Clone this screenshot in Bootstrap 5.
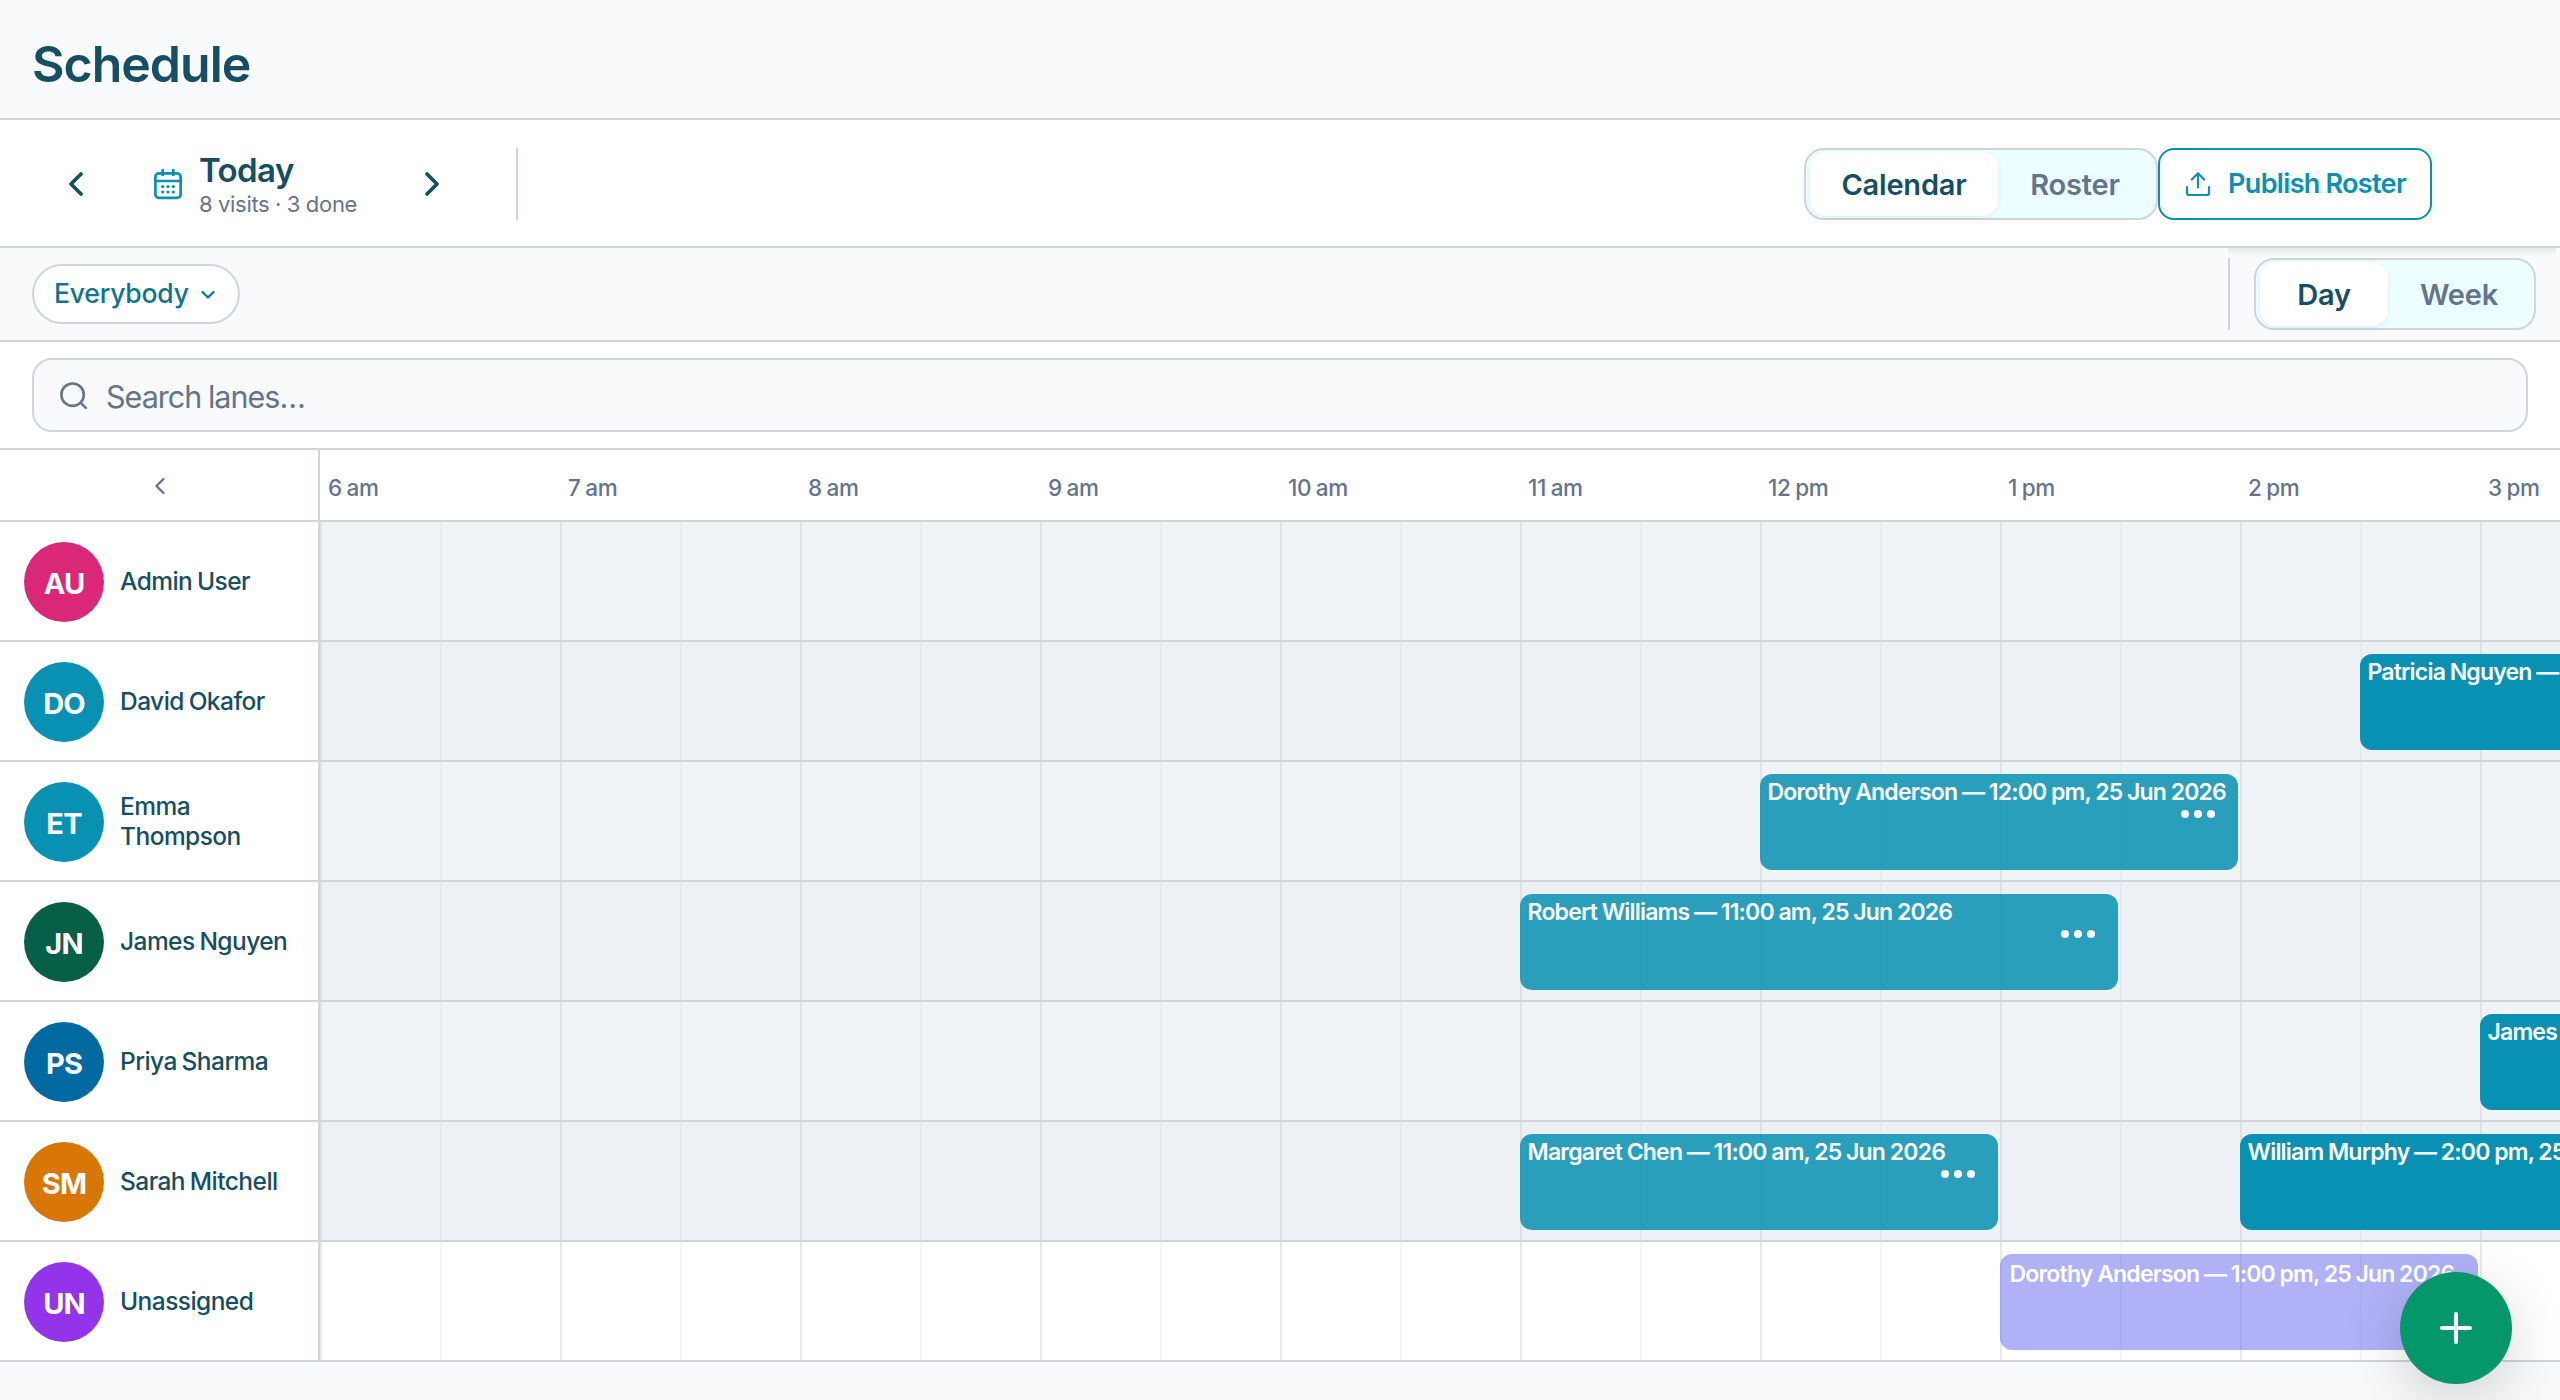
<!DOCTYPE html>
<html lang="en">
<head>
<meta charset="utf-8">
<title>Schedule</title>
<link href="https://cdn.jsdelivr.net/npm/bootstrap@5.3.0/dist/css/bootstrap.min.css" rel="stylesheet">
<style>
  :root { --line: #d0d4db; --ink: #164e63; --muted: #64748b; --teal: #0891b2; }
  body { font-family: Inter, "Open Sans", sans-serif; background: #f9fafc; color: var(--ink); height: 1400px; overflow: hidden; }
  svg { display: block; flex: none; }
  .rule-b { border-bottom: 2px solid var(--line); }
  .page-head { height: 120px; padding: 34px 32px 0; }
  .page-title { font-size: 50px; line-height: 60px; font-weight: 600; letter-spacing: -1px; }
  .toolbar { height: 128px; padding: 2px 128px 0 32px; }
  .step { width: 88px; height: 72px; }
  .day-pick { width: 268px; padding-left: 32px; gap: 15px; }
  .day-name { font-size: 33px; line-height: 36px; font-weight: 600; letter-spacing: -.6px; }
  .day-sub { font-size: 22px; line-height: 32px; color: var(--muted); letter-spacing: -.3px; word-spacing: -.2px; }
  .day-text { padding-top: 4px; }
  .vline { width: 2px; height: 72px; background: var(--line); }
  .day-rule { margin-left: 40px; }
  .seg { height: 72px; border: 2px solid var(--line); border-radius: 20px; background: #ecfeff; padding: 2px 4px; }
  .seg-item { font-size: 29px; line-height: 62px; padding-top: 2px; font-weight: 600; border-radius: 16px; text-align: center; color: var(--muted); height: 64px; letter-spacing: -.2px; }
  .seg-on { background: #fff; color: var(--ink); box-shadow: 0 2px 6px rgba(0,0,0,.06); }
  .w188 { width: 188px; } .w154 { width: 154px; } .w128 { width: 128px; } .w142 { width: 142px; }
  .publish { width: 274px; height: 72px; border: 2px solid var(--teal); border-radius: 16px; color: var(--teal); background: #fff; font-size: 27px; font-weight: 600; letter-spacing: -.65px; word-spacing: -.5px; padding: 0 0 0 24px; gap: 16px; }
  .filters { height: 94px; padding: 0 24px 0 32px; }
  .zoom-shade { top: 0; right: 4px; width: 328px; height: 8px; background: linear-gradient(rgba(0,0,0,.07), rgba(0,0,0,0)); }
  .chip { width: 208px; height: 60px; border: 2px solid var(--line); border-radius: 30px; background: #fff; color: #0e7490; font-size: 26.5px; font-weight: 500; letter-spacing: -.2px; padding-left: 20px; gap: 10px; }
  .search-wrap { height: 108px; padding: 16px 32px 0; }
  .search { height: 74px; border: 2px solid var(--line); border-radius: 20px; background: #f9fafc; color: var(--muted); font-size: 30.5px; letter-spacing: -1px; word-spacing: -.8px; padding-left: 24px; gap: 16px; }
  .side { width: 320px; border-right: 2px solid var(--line); background: #fff; flex: none; }
  .hours { height: 72px; }
  .hour { width: 240px; flex: none; padding: 5px 0 0 8px; font-size: 22.5px; font-weight: 500; color: var(--muted); letter-spacing: -.4px; word-spacing: -.8px; white-space: nowrap; }
  .lane { height: 120px; }
  .lane .side { padding: 2px 20px 0 24px; gap: 16px; }
  .avatar { width: 80px; height: 80px; flex: none; color: #fff; font-size: 29px; font-weight: 700; letter-spacing: -.8px; padding-top: 3px; }
  .person { font-size: 24.5px; line-height: 30px; font-weight: 500; letter-spacing: -.55px; word-spacing: -1.2px; padding-bottom: 2px; }
  .track { background: #f0f4f7 linear-gradient(to right, rgba(200,204,212,.42) 2px, transparent 2px 120px, rgba(200,204,212,.2) 120px 122px, transparent 122px) 0 0 / 240px 100%; }
  .lane:nth-child(even) .track { background-color: #edf0f5; }
  .lane.open .track { background-color: #fff; }
  .visit { top: 12px; height: 96px; border-radius: 12px; background: var(--teal); color: #fff; font-size: 23px; line-height: 28px; font-weight: 600; letter-spacing: -.8px; word-spacing: -.4px; padding: 4px 0 0 7.5px; white-space: nowrap; overflow: hidden; }
  .visit.done { opacity: .85; }
  .visit.loose { background: #6366f1; border: 2px solid #6366f1; opacity: .5; }
  .dots { right: 22px; top: 34px; }
  .fab { right: 48px; bottom: 16px; width: 112px; height: 112px; background: #059669; box-shadow: 0 16px 60px rgba(0,0,0,.17); }
</style>
</head>
<body class="position-relative">
<header class="page-head rule-b"><h1 class="page-title m-0">Schedule</h1></header>

<section class="toolbar rule-b bg-white d-flex align-items-center">
  <div class="step d-flex align-items-center justify-content-center"><svg width="32" height="32" viewBox="0 0 32 32" fill="none" stroke="#164e63" stroke-width="3.8" stroke-linecap="round" stroke-linejoin="round"><path d="M21 6 11 16l10 10"/></svg></div>
  <div class="day-pick d-flex align-items-center">
    <svg width="32" height="32" viewBox="0 0 32 32" fill="none" stroke="#0891b2" stroke-width="2.7" stroke-linecap="round" stroke-linejoin="round"><rect x="3.4" y="5.4" width="25.2" height="24.4" rx="3.4"/><path d="M3.4 13h25.2M10.7 2v5M21.3 2v5"/><g fill="#0891b2" stroke="none"><circle cx="10.7" cy="18.6" r="1.6"/><circle cx="16" cy="18.6" r="1.6"/><circle cx="21.3" cy="18.6" r="1.6"/><circle cx="10.7" cy="24" r="1.6"/><circle cx="16" cy="24" r="1.6"/><circle cx="21.3" cy="24" r="1.6"/></g></svg>
    <div class="day-text text-nowrap"><div class="day-name">Today</div><div class="day-sub">8 visits · 3 done</div></div>
  </div>
  <div class="step d-flex align-items-center justify-content-center"><svg width="32" height="32" viewBox="0 0 32 32" fill="none" stroke="#164e63" stroke-width="3.8" stroke-linecap="round" stroke-linejoin="round"><path d="m11 6 10 10-10 10"/></svg></div>
  <div class="vline day-rule"></div>
  <div class="seg d-flex ms-auto"><div class="seg-item seg-on w188">Calendar</div><div class="seg-item w154">Roster</div></div>
  <button class="publish d-flex align-items-center text-nowrap"><svg width="28" height="28" viewBox="0 0 28 28" fill="none" stroke="#0891b2" stroke-width="2.2" stroke-linecap="round" stroke-linejoin="round"><path d="M3 17v6a2 2 0 0 0 2 2h18a2 2 0 0 0 2-2v-6M14 17.5V3.5M7.8 9.5 14 3.3l6.2 6.2"/></svg><span>Publish Roster</span></button>
</section>

<section class="filters rule-b d-flex align-items-center position-relative">
  <div class="zoom-shade position-absolute"></div>
  <div class="chip d-flex align-items-center"><span>Everybody</span><svg width="18" height="18" viewBox="0 0 18 18" fill="none" stroke="#0e7490" stroke-width="2.2" stroke-linecap="round" stroke-linejoin="round"><path d="m3.5 7 5.500 5.500L14.500 7"/></svg></div>
  <div class="vline ms-auto me-4"></div>
  <div class="seg d-flex"><div class="seg-item seg-on w128">Day</div><div class="seg-item w142">Week</div></div>
</section>

<section class="search-wrap rule-b bg-white">
  <div class="search d-flex align-items-center"><svg width="32" height="32" viewBox="0 0 32 32" fill="none" stroke="#64748b" stroke-width="2.6" stroke-linecap="round"><circle cx="14.600" cy="15.700" r="11.2"/><path d="m22.800 23.900 5 5"/></svg><span class="pt-1">Search lanes…</span></div>
</section>

<div class="hours rule-b bg-white d-flex overflow-hidden">
  <div class="side d-flex align-items-center justify-content-center"><svg width="24" height="24" viewBox="0 0 24 24" fill="none" stroke="#64748b" stroke-width="2.4" stroke-linecap="round" stroke-linejoin="round"><path d="m16.500 6-7 7 7 7"/></svg></div>
  <div class="d-flex align-items-center">
    <div class="hour">6 am</div><div class="hour">7 am</div><div class="hour">8 am</div><div class="hour">9 am</div><div class="hour">10 am</div><div class="hour">11 am</div><div class="hour">12 pm</div><div class="hour">1 pm</div><div class="hour">2 pm</div><div class="hour">3 pm</div>
  </div>
</div>

<main id="lanes"></main>

<button class="fab btn rounded-circle position-absolute d-flex align-items-center justify-content-center p-0 border-0" aria-label="Add visit"><svg width="40" height="40" viewBox="0 0 40 40" stroke="#fff" stroke-width="4" stroke-linecap="round"><path d="M20 6v28M6 20h28"/></svg></button>

<script src="https://cdn.jsdelivr.net/npm/bootstrap@5.3.0/dist/js/bootstrap.bundle.min.js"></script>
<script>
  // Visit times are decimal hours; the track starts at 6 am and one hour is 240px wide.
  const HOUR = 240, START = 6;
  const lanes = [
    { ini: 'AU', name: 'Admin User', color: '#db2777', visits: [] },
    { ini: 'DO', name: 'David Okafor', color: '#0891b2', visits: [{ from: 14.5, to: 16, text: 'Patricia Nguyen — 2:30 pm, 25 Jun 2026' }] },
    { ini: 'ET', name: 'Emma Thompson', color: '#0891b2', visits: [{ from: 12, to: 14, kind: 'done', text: 'Dorothy Anderson — 12:00 pm, 25 Jun 2026' }] },
    { ini: 'JN', name: 'James Nguyen', color: '#065f46', visits: [{ from: 11, to: 13.5, kind: 'done', text: 'Robert Williams — 11:00 am, 25 Jun 2026' }] },
    { ini: 'PS', name: 'Priya Sharma', color: '#0369a1', visits: [{ from: 15, to: 16, text: 'James Smith — 3:00 pm, 25 Jun 2026' }] },
    { ini: 'SM', name: 'Sarah Mitchell', color: '#d97706', visits: [{ from: 11, to: 13, kind: 'done', text: 'Margaret Chen — 11:00 am, 25 Jun 2026' }, { from: 14, to: 16, text: 'William Murphy — 2:00 pm, 25 Jun 2026' }] },
    { ini: 'UN', name: 'Unassigned', color: '#9333ea', open: true, visits: [{ from: 13, to: 15, kind: 'loose', text: 'Dorothy Anderson — 1:00 pm, 25 Jun 2026' }] }
  ];
  const dots = '<svg class="dots position-absolute" width="38" height="12" viewBox="0 0 38 12" fill="#fff"><circle cx="7" cy="6" r="4"/><circle cx="20" cy="6" r="4"/><circle cx="33" cy="6" r="4"/></svg>';
  document.getElementById('lanes').innerHTML = lanes.map(l => `
    <div class="lane rule-b d-flex ${l.open ? 'open' : ''}">
      <div class="side d-flex align-items-center">
        <div class="avatar rounded-circle d-flex align-items-center justify-content-center" style="background:${l.color}">${l.ini}</div>
        <div class="person">${l.name}</div>
      </div>
      <div class="track flex-grow-1 position-relative overflow-hidden">${l.visits.map(v => `
        <div class="visit position-absolute ${v.kind || ''}" style="left:${(v.from - START) * HOUR}px;width:${(v.to - v.from) * HOUR - 2}px">${v.text}${v.kind === 'done' ? dots : ''}</div>`).join('')}
      </div>
    </div>`).join('');
</script>
</body>
</html>
